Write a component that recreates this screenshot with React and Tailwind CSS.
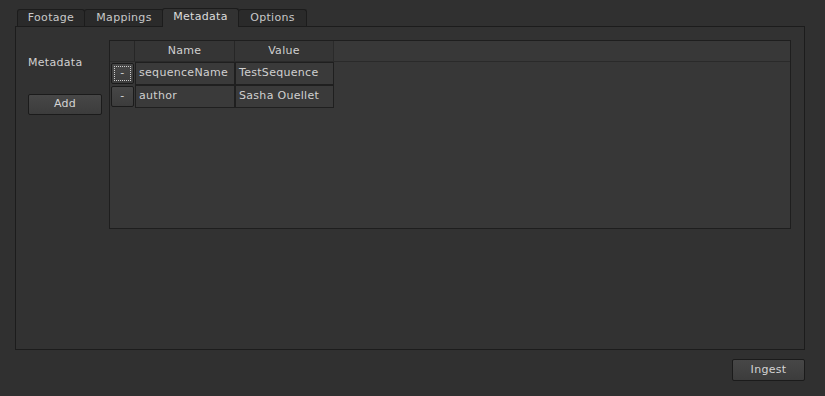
import React from 'react'

const tabs = [
  { label: 'Footage', w: 'w-[68px]' },
  { label: 'Mappings', w: 'w-[80px]' },
  { label: 'Metadata', w: 'w-[77px]' },
  { label: 'Options', w: 'w-[69px]' },
]

const rows = [
  { name: 'sequenceName', value: 'TestSequence', focused: true },
  { name: 'author', value: 'Sasha Ouellet', focused: false },
]

const Tab = ({ label, w, active }) => (
  <div
    className={
      active
        ? `${w} h-[19px] flex items-center justify-center border border-b-0 border-[#1c1c1c] rounded-t-[3px] bg-[#323232] text-[#dcdcdc] -mb-px -ml-[2px] relative z-10 pb-[2px]`
        : `${w} h-[17px] flex items-center justify-center border border-b-0 border-[#1c1c1c] rounded-t-[3px] bg-[#2a2a2a] text-[#c8c8c8] -ml-px first:ml-0`
    }
  >
    {label}
  </div>
)

const Btn = ({ children, className = '' }) => (
  <button
    className={`flex items-center justify-center border border-[#1b1b1b] rounded-[2px] bg-gradient-to-b from-[#474747] to-[#3c3c3c] text-[#d4d4d4] ${className}`}
  >
    {children}
  </button>
)

export default function App() {
  return (
    <div
      className="w-[825px] h-[396px] bg-[#303030] text-[11px] tracking-[0.3px] text-[#d0d0d0] overflow-hidden"
      style={{ fontFamily: '"DejaVu Sans", sans-serif' }}
    >
      <div className="flex items-end pl-[17px] pt-[7px] h-[26px]">
        {tabs.map((t) => (
          <Tab key={t.label} label={t.label} w={t.w} active={t.label === 'Metadata'} />
        ))}
      </div>

      <div className="ml-[15px] w-[790px] h-[324px] border border-[#1c1c1c] bg-[#323232] flex pt-[13px] pl-[12px] pr-[13px]">
        <div className="w-[81px] flex flex-col">
          <div className="mt-[17px] h-[11px] leading-[11px]">Metadata</div>
          <Btn className="mt-[26px] w-[74px] h-[21px]">Add</Btn>
        </div>

        <div className="w-[682px] h-[189px] border border-[#1e1e1e] bg-[#373737] flex flex-col">
          <div className="flex h-[21px] bg-[#353535] border-b border-[#2a2a2a]">
            <div className="w-[25px] border-r border-[#262626]" />
            <div className="w-[100px] border-r border-[#262626] flex items-center justify-center">Name</div>
            <div className="w-[99px] border-r border-[#2a2a2a] flex items-center justify-center">Value</div>
            <div className="flex-1 bg-[#383838]" />
          </div>
          {rows.map((r) => (
            <div key={r.name} className="flex h-[23px]">
              <div className="w-[25px] p-px">
                <Btn className="w-full h-full relative">
                  {r.focused && (
                    <span className="absolute inset-[2px] border border-dotted border-[#cfcfcf]" />
                  )}
                  -
                </Btn>
              </div>
              <div className="w-[100px] border border-[#1f1f1f] bg-[#3a3a3a] flex items-center pl-[3px]">
                {r.name}
              </div>
              <div className="w-[99px] border border-[#1f1f1f] bg-[#3a3a3a] flex items-center pl-[3px]">
                {r.value}
              </div>
            </div>
          ))}
        </div>
      </div>

      <div className="flex justify-end pr-[20px] pt-[9px]">
        <Btn className="w-[73px] h-[22px]">Ingest</Btn>
      </div>
    </div>
  )
}
